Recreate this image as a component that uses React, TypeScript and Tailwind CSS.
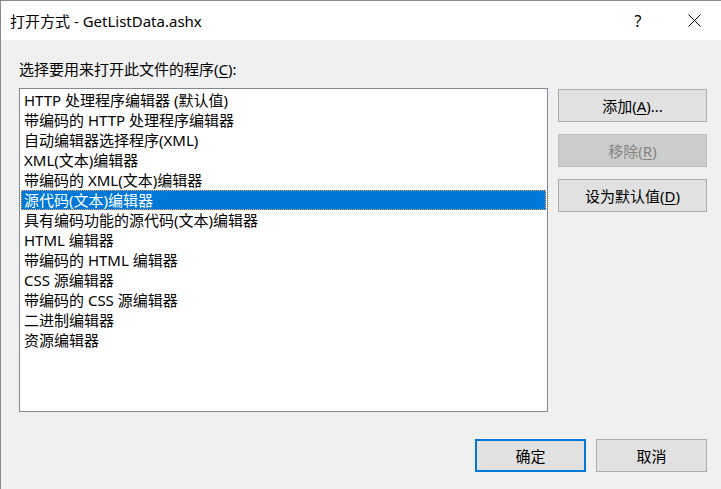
import React from 'react';

const items = [
  'HTTP 处理程序编辑器 (默认值)',
  '带编码的 HTTP 处理程序编辑器',
  '自动编辑器选择程序(XML)',
  'XML(文本)编辑器',
  '带编码的 XML(文本)编辑器',
  '源代码(文本)编辑器',
  '具有编码功能的源代码(文本)编辑器',
  'HTML 编辑器',
  '带编码的 HTML 编辑器',
  'CSS 源编辑器',
  '带编码的 CSS 源编辑器',
  '二进制编辑器',
  '资源编辑器',
];

const SELECTED = 5;

const font = { fontFamily: '"Segoe UI", "Noto Sans", "Noto Sans CJK SC", sans-serif' };

export default function App() {
  return (
    <div
      className="w-[721px] h-[489px] flex flex-col border-t border-l border-[#8a8a8a] bg-[#f0f0f0] text-black text-[15px] leading-[20px] overflow-hidden"
      style={font}
    >
      {/* title bar */}
      <div className="h-[39px] bg-white flex items-center shrink-0">
        <div className="pl-[9px] pt-[1px]">打开方式 - GetListData.ashx</div>
        <div className="ml-auto flex items-center">
          <div className="w-[46px] text-center text-[16px]">?</div>
          <div className="w-[46px] ml-[10px] mr-[4px] flex justify-center">
            <svg width="13" height="13" viewBox="0 0 13 13">
              <path d="M0.5 0.5 L12.5 12.5 M12.5 0.5 L0.5 12.5" stroke="#000" strokeWidth="1" />
            </svg>
          </div>
        </div>
      </div>

      {/* body */}
      <div className="flex flex-col pl-[18px] pr-[14px] pt-[19px]">
        <div>
          选择要用来打开此文件的程序(<span className="underline underline-offset-2">C</span>):
        </div>

        <div className="flex mt-[9px]">
          <div className="w-[530px] h-[324px] border border-[#828790] bg-white p-[1px]">
            {items.map((t, i) => (
              <div
                key={t}
                className={
                  i === SELECTED
                    ? 'h-[20px] pl-[2px] bg-[#0078d7] text-white border border-dotted border-[#f8a060] leading-[18px]'
                    : 'h-[20px] pl-[3px] whitespace-nowrap'
                }
              >
                {t}
              </div>
            ))}
          </div>

          <div className="ml-[10px] mt-[1px] flex flex-col gap-[12px]">
            <button className="w-[149px] h-[33px] bg-[#e1e1e1] border border-[#adadad]">
              添加(<span className="underline underline-offset-2">A</span>)...
            </button>
            <button className="w-[149px] h-[33px] bg-[#cccccc] border border-[#bfbfbf] text-[#838383]">
              移除(<span className="underline underline-offset-2">R</span>)
            </button>
            <button className="w-[149px] h-[33px] bg-[#e1e1e1] border border-[#adadad]">
              设为默认值(<span className="underline underline-offset-2">D</span>)
            </button>
          </div>
        </div>

        <div className="flex justify-end gap-[10px] mt-[27px]">
          <button className="w-[111px] h-[33px] bg-[#e1e1e1] border-2 border-[#0078d7]">确定</button>
          <button className="w-[111px] h-[33px] bg-[#e1e1e1] border border-[#adadad]">取消</button>
        </div>
      </div>
    </div>
  );
}
